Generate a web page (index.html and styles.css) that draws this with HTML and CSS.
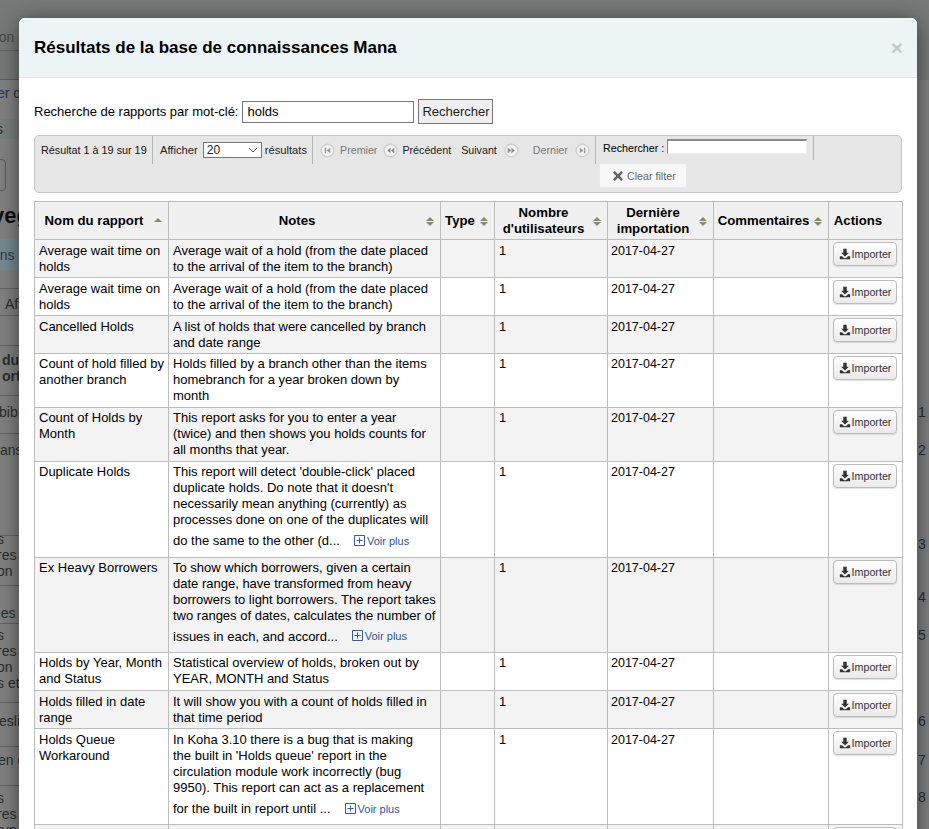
FILE: index.html
```html
<!DOCTYPE html>
<html lang="fr">
<head>
<meta charset="utf-8">
<title>Résultats de la base de connaissances Mana</title>
<link rel="stylesheet" href="styles.css">
</head>
<body>
<svg class="defs" width="0" height="0">
  <symbol id="dl" viewBox="0 0 14 14"><path d="M5 1h4v4.500h2.500L7 10 2.500 5.500H5zM1 9.500h2.500L6 12h2l2.500-2.500H13V13H1z" fill="#333"/></symbol>
  <symbol id="plus" viewBox="0 0 11 11"><path d="M.5.500h10v10H.5zM5.500 2.500v6M2.500 5.500h6" fill="none" stroke="#3a5f8f"/></symbol>
</svg>
<div class="backdrop">
  <div class="bg-top"></div>
  <div class="bg-frag f1">non</div>
  <div class="bg-rule r1"></div>
  <div class="bg-rule r2"></div>
  <div class="bg-frag f2">er d</div>
  <div class="bg-band b1"></div>
  <div class="bg-frag f3">s</div>
  <div class="bg-btn"></div>
  <div class="bg-frag f4">veg</div>
  <div class="bg-band b2"></div>
  <div class="bg-frag f5">ons</div>
  <div class="bg-frag f6">Af</div>
  <div class="bg-frag f7">du<br>ort</div>
  <div class="bg-frag f8">bib</div>
  <div class="bg-frag f9">sans</div>
  <div class="bg-frag f10">s<br>res<br>on</div>
  <div class="bg-frag f11">ees</div>
  <div class="bg-frag f12">s<br>res<br>on<br>s et</div>
  <div class="bg-frag f13">eslib</div>
  <div class="bg-frag f14">en c</div>
  <div class="bg-frag f15">s<br>res<br>ryp</div>
  <div class="bg-rule h h1"></div><div class="bg-rule h h2"></div><div class="bg-rule h h3"></div>
  <div class="bg-rule h h4"></div><div class="bg-rule h h5"></div><div class="bg-rule h h6"></div>
  <div class="bg-rule h h7"></div><div class="bg-rule h h8"></div><div class="bg-rule h h9"></div>
  <div class="bg-rule h h10"></div><div class="bg-rule h h11"></div>
  <div class="bg-num n1">1</div><div class="bg-num n2">2</div><div class="bg-num n3">3</div><div class="bg-num n4">4</div>
  <div class="bg-num n5">5</div><div class="bg-num n6">6</div><div class="bg-num n7">7</div><div class="bg-num n8">8</div>
</div>

<div class="modal">
  <header class="modal-header">
    <h3>Résultats de la base de connaissances Mana</h3>
    <span class="close">×</span>
  </header>
  <div class="modal-body">
    <form class="search-row">
      <label for="kw">Recherche de rapports par mot-clé:</label>
      <input id="kw" class="kw" type="text" value="holds">
      <button class="go" type="button">Rechercher</button>
    </form>

    <div class="pager">
      <div class="pager-top">
        <div class="seg seg-info">Résultat 1 à 19 sur 19</div>
        <div class="seg seg-len">Afficher
          <span class="select">20<svg width="10" height="6" viewBox="0 0 10 6"><path d="M1 1l4 4 4-4" fill="none" stroke="#555" stroke-width="1"/></svg></span>
          résultats</div>
        <div class="seg seg-nav">
          <span class="nav off first"><svg class="pg" viewBox="0 0 16 16"><circle cx="8" cy="8" r="7.500" fill="#cfcfcf"/><circle cx="8" cy="8" r="6" fill="#f2f2f2"/><path d="M5 5h1.500v6H5zM11 5v6L7 8z" fill="#999"/></svg>Premier</span>
          <span class="nav prev"><svg class="pg" viewBox="0 0 16 16"><circle cx="8" cy="8" r="7.500" fill="#cfcfcf"/><circle cx="8" cy="8" r="6" fill="#f2f2f2"/><path d="M8 5v6L4.500 8zM12 5v6L8.500 8z" fill="#888"/></svg>Précédent</span>
          <span class="nav next">Suivant<svg class="pg" viewBox="0 0 16 16"><circle cx="8" cy="8" r="7.500" fill="#cfcfcf"/><circle cx="8" cy="8" r="6" fill="#f2f2f2"/><path d="M4 5v6l3.500-3zM8 5v6l3.500-3z" fill="#888"/></svg></span>
          <span class="nav off last">Dernier<svg class="pg" viewBox="0 0 16 16"><circle cx="8" cy="8" r="7.500" fill="#cfcfcf"/><circle cx="8" cy="8" r="6" fill="#f2f2f2"/><path d="M5 5v6l4-3zM9.500 5H11v6H9.500z" fill="#999"/></svg></span>
        </div>
        <div class="seg seg-filter"><label for="flt">Rechercher :</label><input id="flt" class="flt" type="text"></div>
      </div>
      <button class="clear" type="button"><svg class="x" viewBox="0 0 12 12"><path d="M2.800 1L6 4.200 9.200 1 11 2.800 7.800 6 11 9.200 9.200 11 6 7.800 2.800 11 1 9.200 4.200 6 1 2.800z" fill="#666"/></svg>Clear filter</button>
    </div>

    <table class="results">
      <colgroup>
        <col class="c1"><col class="c2"><col class="c3"><col class="c4"><col class="c5"><col class="c6"><col class="c7">
      </colgroup>
      <thead>
        <tr>
          <th class="sort asc"><span>Nom du rapport</span></th>
          <th class="sort"><span>Notes</span></th>
          <th class="sort"><span>Type</span></th>
          <th class="sort"><span>Nombre d'utilisateurs</span></th>
          <th class="sort"><span>Dernière importation</span></th>
          <th class="sort"><span>Commentaires</span></th>
          <th><span>Actions</span></th>
        </tr>
      </thead>
      <tbody>
        <tr class="odd"><td>Average wait time on holds</td><td class="notes">Average wait of a hold (from the date placed<br>to the arrival of the item to the branch)</td><td></td><td>1</td><td class="date">2017-04-27</td><td></td><td class="act"><button class="imp" type="button"><svg class="dl"><use href="#dl"/></svg>Importer</button></td></tr>
        <tr><td>Average wait time on holds</td><td class="notes">Average wait of a hold (from the date placed<br>to the arrival of the item to the branch)</td><td></td><td>1</td><td class="date">2017-04-27</td><td></td><td class="act"><button class="imp" type="button"><svg class="dl"><use href="#dl"/></svg>Importer</button></td></tr>
        <tr class="odd"><td>Cancelled Holds</td><td class="notes">A list of holds that were cancelled by branch<br>and date range</td><td></td><td>1</td><td class="date">2017-04-27</td><td></td><td class="act"><button class="imp" type="button"><svg class="dl"><use href="#dl"/></svg>Importer</button></td></tr>
        <tr class="up"><td class="notes">Count of hold filled by<br>another branch</td><td class="notes">Holds filled by a branch other than the items<br>homebranch for a year broken down by<br>month</td><td></td><td>1</td><td class="date">2017-04-27</td><td></td><td class="act"><button class="imp" type="button"><svg class="dl"><use href="#dl"/></svg>Importer</button></td></tr>
        <tr class="odd up"><td>Count of Holds by Month</td><td class="notes">This report asks for you to enter a year<br>(twice) and then shows you holds counts for<br>all months that year.</td><td></td><td>1</td><td class="date">2017-04-27</td><td></td><td class="act"><button class="imp" type="button"><svg class="dl"><use href="#dl"/></svg>Importer</button></td></tr>
        <tr class="up"><td>Duplicate Holds</td><td class="notes">This report will detect 'double-click' placed<br>duplicate holds. Do note that it doesn't<br>necessarily mean anything (currently) as<br>processes done on one of the duplicates will<br>do the same to the other (d...<a class="more"><svg class="plus"><use href="#plus"/></svg>Voir plus</a></td><td></td><td>1</td><td class="date">2017-04-27</td><td></td><td class="act"><button class="imp" type="button"><svg class="dl"><use href="#dl"/></svg>Importer</button></td></tr>
        <tr class="odd up"><td>Ex Heavy Borrowers</td><td class="notes">To show which borrowers, given a certain<br>date range, have transformed from heavy<br>borrowers to light borrowers. The report takes<br>two ranges of dates, calculates the number of<br>issues in each, and accord...<a class="more"><svg class="plus"><use href="#plus"/></svg>Voir plus</a></td><td></td><td>1</td><td class="date">2017-04-27</td><td></td><td class="act"><button class="imp" type="button"><svg class="dl"><use href="#dl"/></svg>Importer</button></td></tr>
        <tr class="up"><td>Holds by Year, Month and Status</td><td class="notes">Statistical overview of holds, broken out by<br>YEAR, MONTH and Status</td><td></td><td>1</td><td class="date">2017-04-27</td><td></td><td class="act"><button class="imp" type="button"><svg class="dl"><use href="#dl"/></svg>Importer</button></td></tr>
        <tr class="odd"><td>Holds filled in date range</td><td class="notes">It will show you with a count of holds filled in<br>that time period</td><td></td><td>1</td><td class="date">2017-04-27</td><td></td><td class="act"><button class="imp" type="button"><svg class="dl"><use href="#dl"/></svg>Importer</button></td></tr>
        <tr><td>Holds Queue Workaround</td><td class="notes">In Koha 3.10 there is a bug that is making<br>the built in 'Holds queue' report in the<br>circulation module work incorrectly (bug<br>9950). This report can act as a replacement<br>for the built in report until ...<a class="more"><svg class="plus"><use href="#plus"/></svg>Voir plus</a></td><td></td><td>1</td><td class="date">2017-04-27</td><td></td><td class="act"><button class="imp" type="button"><svg class="dl"><use href="#dl"/></svg>Importer</button></td></tr>
        <tr class="odd"><td>&nbsp;</td><td></td><td></td><td></td><td></td><td></td><td class="act"><button class="imp" type="button"><svg class="dl"><use href="#dl"/></svg>Importer</button></td></tr>
      </tbody>
    </table>
  </div>
</div>
</body>
</html>
```

FILE: styles.css
```css
* { box-sizing: border-box; }
html, body { margin: 0; height: 829px; overflow: hidden; }
body {
  position: relative;
  background: #808080;
  font-family: "Liberation Sans", Arial, sans-serif;
  font-size: 13px;
  color: #000;
}
.defs { position: absolute; }

/* dimmed page behind the modal */
.backdrop { position: absolute; inset: 0; overflow: hidden; background: #828282; color: #2a2f2f; }
.bg-top { position: absolute; left: 0; right: 0; top: 0; height: 80px; background: #767b7a; }
.bg-frag { position: absolute; left: 0; font-size: 14px; line-height: 16px; white-space: nowrap; }
.bg-rule { position: absolute; background: #646464; height: 1px; left: 0; width: 19px; }
.bg-band { position: absolute; left: 0; width: 19px; background: #79817f; }
.bg-btn { position: absolute; left: -8px; top: 159px; width: 14px; height: 32px; border: 1px solid #5a5a5a; border-radius: 4px; }
.bg-num { position: absolute; left: 918px; font-size: 14px; line-height: 16px; color: #1c2f4c; }
.r1 { top: 50px; }
.r2 { top: 79px; background: #5a6a30; }
.f1 { top: 29px; left: -9px; color: #454a49; }
.f2 { top: 85px; left: -3px; color: #1e3654; }
.b1 { top: 119px; height: 20px; }
.f3 { top: 121px; left: -4px; }
.f4 { top: 203px; left: -8px; font-weight: 700; font-size: 22px; line-height: 26px; color: #111; }
.b2 { top: 239px; height: 31px; background: #788a92; }
.f5 { top: 247px; left: -8px; color: #29404f; }
.f6 { top: 296px; left: 5px; }
.f7 { top: 352px; left: 2px; font-weight: 700; }
.f8 { top: 404px; left: -1px; }
.f9 { top: 442px; left: -7px; }
.f10 { top: 531px; left: -3px; line-height: 16px; }
.f11 { top: 605px; left: -7px; }
.f12 { top: 627px; left: -3px; }
.f13 { top: 713px; left: -1px; }
.f14 { top: 752px; left: -2px; }
.f15 { top: 790px; left: -3px; }
.h1 { top: 288px; } .h2 { top: 315px; } .h3 { top: 345px; } .h4 { top: 395px; }
.h5 { top: 433px; } .h6 { top: 535px; } .h7 { top: 585px; } .h8 { top: 623px; }
.h9 { top: 702px; } .h10 { top: 746px; } .h11 { top: 785px; }
.n1 { top: 404px; } .n2 { top: 442px; } .n3 { top: 536px; } .n4 { top: 589px; }
.n5 { top: 627px; } .n6 { top: 713px; } .n7 { top: 752px; } .n8 { top: 789px; }

/* modal */
.modal {
  position: absolute;
  left: 19px; top: 18px;
  width: 898px; height: 860px;
  background: #fff;
  border-radius: 6px;
  box-shadow: 0 3px 22px rgba(0, 0, 0, .55);
  overflow: hidden;
}
.modal-header {
  height: 60px;
  background: #edf4f6;
  border-bottom: 1px solid #e5e5e5;
  padding: 0 15px;
  display: flex;
  align-items: center;
  justify-content: space-between;
}
.modal-header h3 { margin: 0; font-size: 17px; font-weight: 700; line-height: 20px; }
.close { font-size: 21px; font-weight: 700; color: #c4c8c9; line-height: 20px; margin-right: -1px; }
.modal-body { padding: 21px 15px 0; }

.search-row { display: flex; align-items: center; height: 25px; gap: 4px; margin-bottom: 11px; }
.search-row label { font-size: 13px; }
.kw { width: 172px; height: 22px; border: 1px solid #767676; padding: 1px 4px; font: 13px "Liberation Sans", sans-serif; }
.go { height: 25px; width: 75px; padding: 0; border: 1px solid #777; background: #efefef; font: 13px "Liberation Sans", sans-serif; color: #222; }

.pager {
  height: 58px;
  background: #e6e6e6;
  border: 1px solid #c4c4c4;
  border-radius: 5px;
  margin-bottom: 8px;
}
.pager-top { display: flex; align-items: flex-start; height: 28px; }
.seg { border-right: 1px solid #b4b4b4; display: flex; align-items: center; font-size: 10.700px; white-space: nowrap; height: 28px; }
.seg-info { width: 118px; padding-left: 6px; font-size: 10.800px; color: #111; }
.seg-len { width: 160px; padding-left: 7px; gap: 3px; color: #222; font-size: 11.200px; }
.select {
  display: inline-flex; align-items: center; justify-content: space-between;
  width: 59px; height: 16px; margin-left: 2px; background: #fff; border: 1px solid #767676; padding: 0 3px 0 3px;
  font-size: 12px;
}
.seg-nav { width: 283px; padding-left: 7px; color: #222; }
.nav { display: inline-flex; align-items: center; }
.pg { width: 15px; height: 15px; }
.first .pg { margin-right: 5px; }
.first { margin-right: 6px; }
.prev .pg { margin-right: 4px; }
.prev { margin-right: 10px; }
.next .pg { margin-left: 7px; }
.next { margin-right: 14px; }
.last .pg { margin-left: 7px; }
.nav.off { color: #777; }
.seg-filter { width: 218px; height: 24px; padding-left: 7px; gap: 3px; align-items: flex-start; padding-top: 3px; }
.seg-filter label { line-height: 13px; margin-top: 3px; }
.flt { width: 140px; height: 15px; border: 1px solid #8a8a8a; border-top-width: 2px; border-right-color: #eee; border-bottom-color: #eee; background: #fff; padding: 0; }
.clear {
  display: flex; align-items: center; gap: 3px;
  width: 88px; height: 25px;
  margin: -1px 0 0 564px;
  padding: 0 0 0 12px;
  background: #f8f8f8;
  border: 1px solid #e8e8e8;
  border-radius: 2px;
  font: 10.700px "Liberation Sans", sans-serif;
  color: #666;
}
.x { width: 12px; height: 12px; }

.results { border-collapse: collapse; table-layout: fixed; width: 868px; font-size: 13px; }
.c1 { width: 134px; } .c2 { width: 272px; } .c3 { width: 54px; } .c4 { width: 113px; }
.c5 { width: 106px; } .c6 { width: 115px; } .c7 { width: 74px; }
.results th, .results td { border: 1px solid #bcbcbc; }
.results th {
  height: 38px; background: #f0f0f0; font-size: 13.200px; line-height: 16px; font-weight: 700;
  text-align: center; padding: 2px 18px 2px 3px; color: #000; position: relative;
}
.results th.sort::after {
  content: ""; position: absolute; right: 6px; top: 15px;
  width: 0; height: 0;
  border-left: 4px solid transparent; border-right: 4px solid transparent;
  border-bottom: 4px solid #8c8c60;
}
.results th.sort::before {
  content: ""; position: absolute; right: 6px; top: 20px;
  width: 0; height: 0;
  border-left: 4px solid transparent; border-right: 4px solid transparent;
  border-top: 4px solid #8c8c60;
}
.results th.asc::before { display: none; }
.results th.asc::after { top: 16px; }
.results td { vertical-align: top; font-size: 13px; line-height: 16px; padding: 3px 4px 2px; word-wrap: break-word; }
.results tr.up td { padding-top: 2px; padding-bottom: 3px; }
.results td.notes { white-space: nowrap; }
.results td.date { font-size: 12.500px; padding-left: 3px; }
.results tr.odd td { background: #f3f3f3; }
.more { color: #2a5a94; font-size: 11px; margin-left: 14px; padding: 4.750px 0; display: inline-block; white-space: nowrap; }
.plus { width: 11px; height: 11px; margin-right: 2px; vertical-align: -1px; }
.results td.act, .results tr.up td.act { padding: 2px 4px; }
.imp {
  display: flex; align-items: center; justify-content: center; gap: 1px;
  width: 64px; height: 24px; padding: 0;
  background: linear-gradient(#fff, #eaeaea);
  border: 1px solid #bcbcbc; border-radius: 4px;
  box-shadow: 0 1px 1px rgba(0,0,0,.12);
  font: 10.700px "Liberation Sans", sans-serif;
  color: #333;
}
.dl { width: 12px; height: 12px; }
```
